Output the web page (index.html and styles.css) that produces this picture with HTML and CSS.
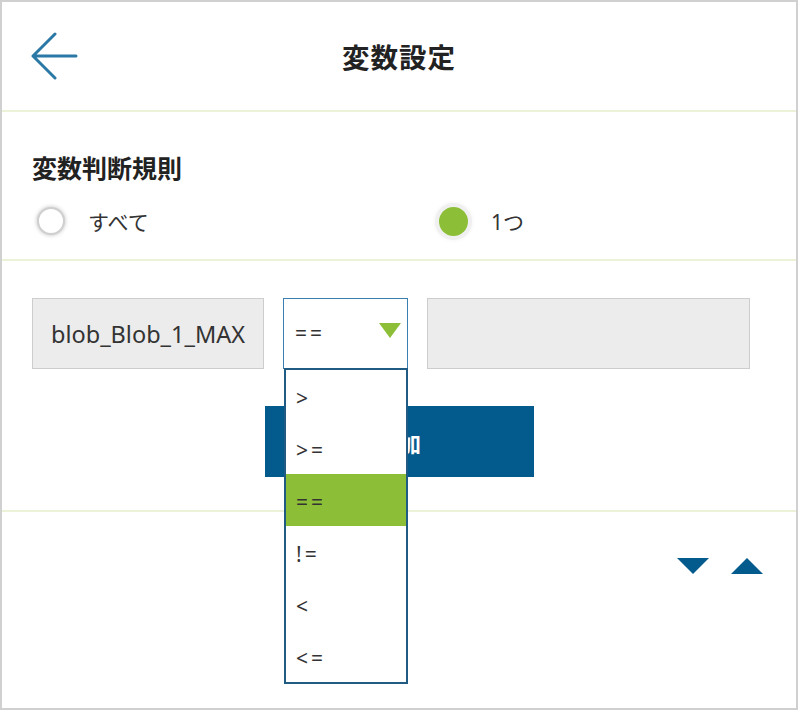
FILE: index.html
```html
<!DOCTYPE html>
<html lang="ja">
<head>
  <meta charset="UTF-8" />
  <title>変数設定</title>
  <link rel="stylesheet" href="styles.css">
</head>
<body>
  <div class="frame">
    <div class="header">
      <svg class="back" width="48" height="48" viewBox="0 0 48 48">
        <path d="M3 24 H46 M25 2 L3 24 L25 46" fill="none" stroke="#2a78a6" stroke-width="3" stroke-linecap="round" stroke-linejoin="round"/>
      </svg>
      <h1 class="title">変数設定</h1>
      <span></span>
    </div>

    <div class="section rule">
      <div class="label">変数判断規則</div>
      <div class="radios">
        <div class="radio"><span class="dot"></span><span>すべて</span></div>
        <div class="radio"><span class="dot on"></span><span>1つ</span></div>
      </div>
    </div>

    <div class="section cond">
      <div class="row">
        <div class="box name">blob_Blob_1_MAX</div>
        <div class="select">
          <span class="op">==</span>
          <span class="caret"></span>
          <ul class="menu">
            <li>&gt;</li>
            <li>&gt;=</li>
            <li class="active">==</li>
            <li>!=</li>
            <li>&lt;</li>
            <li>&lt;=</li>
          </ul>
        </div>
        <div class="box value"></div>
      </div>
      <button class="add">追加</button>
    </div>

    <div class="pager">
      <span class="tri down"></span>
      <span class="tri up"></span>
    </div>
  </div>
</body>
</html>
```

FILE: styles.css
```css
body { margin: 0; font-family: "Noto Sans", "Noto Sans CJK JP", sans-serif; color: #333; }
.frame {
  width: 798px;
  height: 710px;
  border: 2px solid #d0d0d0;
  box-sizing: border-box;
  background: #fff;
}

.header {
  height: 108px;
  display: grid;
  grid-template-columns: 1fr auto 1fr;
  align-items: center;
  border-bottom: 2px solid #ebf2d8;
}
.back { margin-left: 28px; }
.title { margin: 0; font-size: 27.5px; font-weight: bold; color: #222; letter-spacing: 1px; }

.section { border-bottom: 2px solid #ebf2d8; }
.rule { padding: 40px 0 20px 30px; }
.label { font-size: 25px; line-height: 32px; font-weight: bold; color: #222; }
.radios { display: grid; grid-template-columns: 402px 1fr; margin-top: 19px; height: 36px; }
.radio { display: flex; align-items: center; gap: 23px; font-size: 21px; color: #333; padding-left: 5px; }
.dot {
  width: 24px;
  height: 24px;
  border-radius: 50%;
  border: 2px solid #cfcfcf;
  box-shadow: 0 0 4px rgba(0, 0, 0, 0.25);
  background: #fff;
}
.dot.on {
  width: 29px;
  height: 29px;
  border: none;
  background: #8cbf37;
  box-shadow: 0 0 0 4px #f0f0f0, 0 0 4px 4px rgba(0, 0, 0, 0.06);
}

.cond { padding: 37px 0 33px 0; }
.row { display: flex; gap: 19px; height: 71px; padding-left: 30px; }
.box {
  box-sizing: border-box;
  background: #ececec;
  border: 1px solid #cdcdcd;
  height: 71px;
}
.name { width: 232px; display: flex; align-items: center; justify-content: center; font-size: 23.5px; color: #333; }
.value { width: 323px; }
.select {
  position: relative;
  box-sizing: border-box;
  width: 125px;
  height: 71px;
  border: 1px solid #3a7fb0;
  display: flex;
  align-items: center;
  justify-content: space-between;
  padding: 0 6px 2px 11px;
  font-size: 21px;
}
.op { letter-spacing: 3px; }
.caret {
  width: 0;
  height: 0;
  border-left: 11px solid transparent;
  border-right: 11px solid transparent;
  border-top: 15px solid #8cbf37;
  margin-bottom: 4px;
}
.menu {
  position: absolute;
  top: 100%;
  left: 0;
  right: -1px;
  margin: 0;
  padding: 0;
  list-style: none;
  background: #fff;
  border: 2px solid #1f5b82;
  z-index: 2;
}
.menu li { height: 52px; line-height: 56px; padding-left: 10px; font-size: 21px; letter-spacing: 3px; color: #333; }
.menu li.active { background: #8cbf37; }

.add {
  display: block;
  margin: 37px auto 0;
  width: 269px;
  height: 71px;
  border: none;
  background: #035b8d;
  color: #fff;
  font-family: inherit;
  font-size: 22px;
  font-weight: bold;
}

.pager { display: flex; justify-content: flex-end; gap: 22px; padding: 46px 33px 0 0; }
.tri { width: 0; height: 0; border-left: 16px solid transparent; border-right: 16px solid transparent; }
.tri.down { border-top: 16px solid #035b8d; }
.tri.up { border-bottom: 16px solid #035b8d; }
```
